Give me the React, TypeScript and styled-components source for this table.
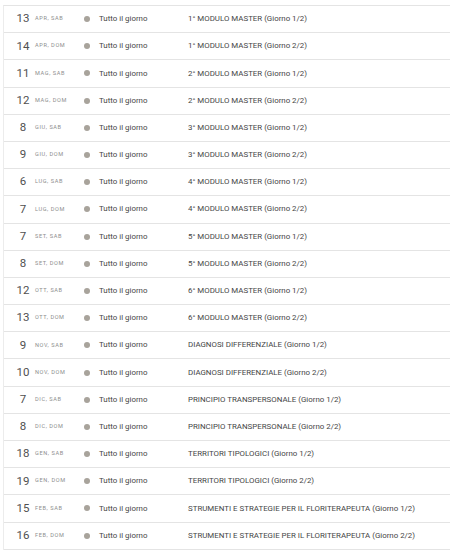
import React from "react";
import styled, { createGlobalStyle } from "styled-components";

const Global = createGlobalStyle`
  html, body { margin: 0; padding: 0; background: #fff; }
  body { font-family: Roboto, "Noto Sans", Arial, sans-serif; overflow: hidden; }
`;

const Frame = styled.div`
  width: 450px;
  height: 557px;
  overflow: hidden;
  background: #fff;
  padding-top: 5px;
  box-sizing: border-box;
`;

const List = styled.div`
  margin-left: 3px;
  border-left: 1px solid #ececec;
  border-top: 1px solid #e4e4e4;
`;

const Row = styled.div`
  display: grid;
  grid-template-columns: 20px 47px 19px 89px 1fr;
  align-items: center;
  height: 27.2px;
  box-sizing: border-box;
  border-bottom: 1px solid #e4e4e4;
  padding-left: 9px;
`;

const Day = styled.div`
  font-size: 11.5px;
  color: #505050;
  text-align: center;
  line-height: 1;
`;

const Month = styled.div`
  font-size: 5.6px;
  letter-spacing: 0.6px;
  color: #8e8e8e;
  text-transform: uppercase;
  line-height: 1;
  padding-left: 2px;
`;

const Dot = styled.span`
  width: 6px;
  height: 6px;
  border-radius: 50%;
  background: #a8a39b;
  display: block;
  margin-left: 4px;
`;

const Time = styled.div`
  font-size: 7.9px;
  color: #454545;
  line-height: 1;
`;

const Title = styled.div`
  font-size: 7.9px;
  color: #454545;
  line-height: 1;
  white-space: nowrap;
`;

const events: [string, string, string][] = [
  ["13", "Apr, Sab", "1° MODULO MASTER (Giorno 1/2)"],
  ["14", "Apr, Dom", "1° MODULO MASTER (Giorno 2/2)"],
  ["11", "Mag, Sab", "2° MODULO MASTER (Giorno 1/2)"],
  ["12", "Mag, Dom", "2° MODULO MASTER (Giorno 2/2)"],
  ["8", "Giu, Sab", "3° MODULO MASTER (Giorno 1/2)"],
  ["9", "Giu, Dom", "3° MODULO MASTER (Giorno 2/2)"],
  ["6", "Lug, Sab", "4° MODULO MASTER (Giorno 1/2)"],
  ["7", "Lug, Dom", "4° MODULO MASTER (Giorno 2/2)"],
  ["7", "Set, Sab", "5° MODULO MASTER (Giorno 1/2)"],
  ["8", "Set, Dom", "5° MODULO MASTER (Giorno 2/2)"],
  ["12", "Ott, Sab", "6° MODULO MASTER (Giorno 1/2)"],
  ["13", "Ott, Dom", "6° MODULO MASTER (Giorno 2/2)"],
  ["9", "Nov, Sab", "DIAGNOSI DIFFERENZIALE (Giorno 1/2)"],
  ["10", "Nov, Dom", "DIAGNOSI DIFFERENZIALE (Giorno 2/2)"],
  ["7", "Dic, Sab", "PRINCIPIO TRANSPERSONALE (Giorno 1/2)"],
  ["8", "Dic, Dom", "PRINCIPIO TRANSPERSONALE (Giorno 2/2)"],
  ["18", "Gen, Sab", "TERRITORI TIPOLOGICI (Giorno 1/2)"],
  ["19", "Gen, Dom", "TERRITORI TIPOLOGICI (Giorno 2/2)"],
  ["15", "Feb, Sab", "STRUMENTI E STRATEGIE PER IL FLORITERAPEUTA (Giorno 1/2)"],
  ["16", "Feb, Dom", "STRUMENTI E STRATEGIE PER IL FLORITERAPEUTA (Giorno 2/2)"],
];

export default function App() {
  return (
    <>
      <Global />
      <Frame>
        <List>
          {events.map(([d, m, t], i) => (
            <Row key={i}>
              <Day>{d}</Day>
              <Month>{m}</Month>
              <Dot />
              <Time>Tutto il giorno</Time>
              <Title>{t}</Title>
            </Row>
          ))}
        </List>
      </Frame>
    </>
  );
}
